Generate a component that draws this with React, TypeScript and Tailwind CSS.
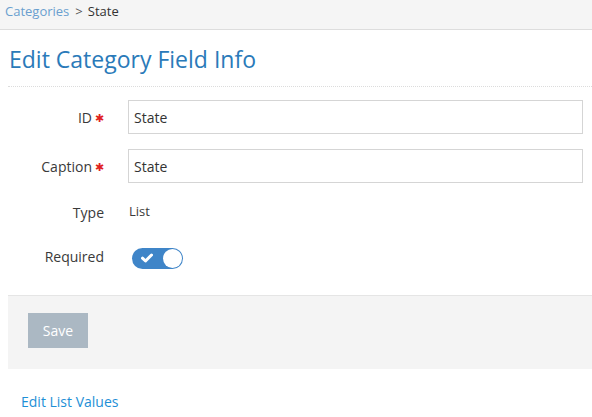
import React from "react";

export default function App() {
  return (
    <div className="w-[592px] h-[417px] bg-white overflow-hidden" style={{ fontFamily: '"Open Sans", sans-serif' }}>
      <div className="h-[30px] bg-[#f5f5f5] border-b border-[#dddddd] pl-[5px] flex items-center text-[13px] leading-none pb-[7px]">
        <span className="text-[#6a9fcf]">Categories</span>
        <span className="text-[#555] ml-[6px]">&gt;</span>
        <span className="text-[#333] ml-[5px]">State</span>
      </div>
      <div className="pl-[8px]">
        <div className="h-[57px] border-b border-dotted border-[#dcdcdc] flex items-center">
          <h1 className="text-[23px] text-[#2a7ab9] leading-none ml-[1px] mt-[2px]">Edit Category Field Info</h1>
        </div>
        <div className="pr-[9px] pt-[13px] text-[14px] text-[#3a3a3a]">
          <div className="flex items-center h-[34px]">
            <div className="w-[96px] text-right">ID<span className="text-[#e02222] ml-[3px] text-[11px] relative -top-[1px]">✱</span></div>
            <input className="ml-[24px] flex-1 h-[34px] border border-[#d5d5d5] px-[5px] outline-none text-[#333]" defaultValue="State" />
          </div>
          <div className="flex items-center h-[34px] mt-[15px]">
            <div className="w-[96px] text-right">Caption<span className="text-[#e02222] ml-[3px] text-[11px] relative -top-[1px]">✱</span></div>
            <input className="ml-[24px] flex-1 h-[34px] border border-[#d5d5d5] px-[5px] outline-none text-[#333]" defaultValue="State" />
          </div>
          <div className="flex items-center h-[20px] mt-[19px]">
            <div className="w-[96px] text-right">Type</div>
            <div className="ml-[25px] text-[13px]">List</div>
          </div>
          <div className="flex items-center h-[22px] mt-[25px]">
            <div className="w-[96px] text-right -mt-[4px]">Required</div>
            <div className="ml-[28px] w-[51px] h-[21px] rounded-full bg-[#3f85c8] flex items-center justify-between pl-[9px] pr-[1px]">
              <svg width="12" height="10" viewBox="0 0 12 10">
                <path d="M1.5 5.2 L4.5 8 L10.5 2" stroke="white" strokeWidth="3" fill="none" strokeLinecap="round" strokeLinejoin="round" />
              </svg>
              <div className="w-[19px] h-[19px] rounded-full bg-white" />
            </div>
          </div>
        </div>
        <div className="mt-[26px] h-[74px] bg-[#f4f4f4] border-t border-[#e5e5e5] pl-[20px] pt-[17px]">
          <button className="w-[60px] h-[35px] bg-[#abb8c3] text-white text-[14px]">Save</button>
        </div>
        <div className="mt-[22px] pl-[13px] text-[14px] text-[#1e8fd6]">Edit List Values</div>
      </div>
    </div>
  );
}
